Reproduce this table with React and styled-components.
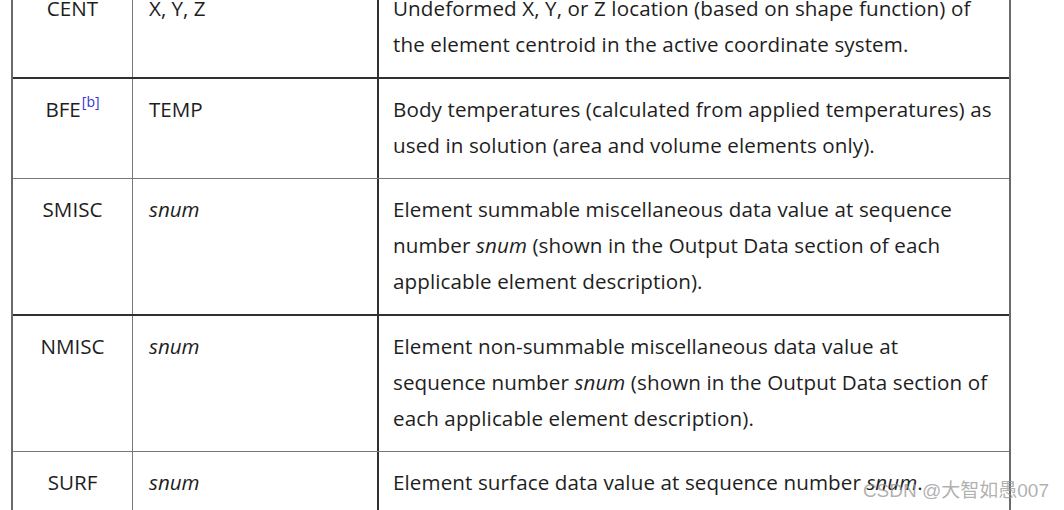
import React from "react";
import styled, { createGlobalStyle } from "styled-components";

const GlobalStyle = createGlobalStyle`
  html, body {
    margin: 0;
    padding: 0;
    background: #fff;
    overflow: hidden;
  }
  body {
    font-family: "Open Sans", "Noto Sans", sans-serif;
    color: #1e1e1e;
  }
`;

const rows = [
  {
    name: "CENT",
    item: "X, Y, Z",
    desc: [
      "Undeformed X, Y, or Z location (based on shape function) of",
      "the element centroid in the active coordinate system.",
    ],
    heavy: true,
  },
  {
    name: "BFE",
    note: "b",
    item: "TEMP",
    desc: [
      "Body temperatures (calculated from applied temperatures) as",
      "used in solution (area and volume elements only).",
    ],
  },
  {
    name: "SMISC",
    item: "snum",
    italic: true,
    desc: [
      "Element summable miscellaneous data value at sequence",
      ["number ", <em key="s">snum</em>, " (shown in the Output Data section of each"],
      "applicable element description).",
    ],
    heavy: true,
  },
  {
    name: "NMISC",
    item: "snum",
    italic: true,
    desc: [
      "Element non-summable miscellaneous data value at",
      ["sequence number ", <em key="s">snum</em>, " (shown in the Output Data section of"],
      "each applicable element description).",
    ],
  },
  {
    name: "SURF",
    item: "snum",
    italic: true,
    desc: [["Element surface data value at sequence number ", <em key="s">snum</em>, "."]],
  },
];

const Page = styled.div`
  position: relative;
  width: 1064px;
  height: 510px;
  overflow: hidden;
`;

const Table = styled.div`
  margin: -22px 0 0 11px;
  width: 1000px;
  border-left: 2px solid #6a6a6a;
  border-right: 2px solid #6a6a6a;
  box-sizing: border-box;
`;

const Row = styled.div`
  display: grid;
  grid-template-columns: 119px 245px 1fr;
  border-bottom: ${(p) => (p.$heavy ? "2px solid #303030" : "1px solid #777")};
`;

const Cell = styled.div`
  padding: 12px 14px 15px 16px;
  font-size: 20.6px;
  line-height: 36px;
  white-space: nowrap;
`;

const NameCell = styled(Cell)`
  text-align: center;
  padding-left: 4px;
  padding-right: 4px;
`;

const ItemCell = styled(Cell)`
  border-left: 1px solid #777;
  font-style: ${(p) => (p.$italic ? "italic" : "normal")};
`;

const DescCell = styled(Cell)`
  border-left: 2px solid #303030;
  padding-left: 14px;
  letter-spacing: 0.1px;

  em {
    font-style: italic;
  }
`;

const Line = styled.div``;

const Note = styled.sup`
  color: #3434d2;
  font-size: 14px;
  line-height: 0;
  position: relative;
  top: -2px;
  margin-left: 1px;
`;

const Watermark = styled.div`
  position: absolute;
  right: 15px;
  bottom: 8px;
  font-family: "Liberation Sans", "Noto Sans CJK SC", sans-serif;
  font-size: 19px;
  color: rgba(150, 150, 150, 0.75);
`;

export default function App() {
  return (
    <>
      <GlobalStyle />
      <Page>
        <Table>
          {rows.map((r) => (
            <Row key={r.name} $heavy={r.heavy}>
              <NameCell>
                {r.name}
                {r.note && <Note>[{r.note}]</Note>}
              </NameCell>
              <ItemCell $italic={r.italic}>{r.item}</ItemCell>
              <DescCell>
                {r.desc.map((line, i) => (
                  <Line key={i}>{line}</Line>
                ))}
              </DescCell>
            </Row>
          ))}
        </Table>
        <Watermark>CSDN @大智如愚007</Watermark>
      </Page>
    </>
  );
}
